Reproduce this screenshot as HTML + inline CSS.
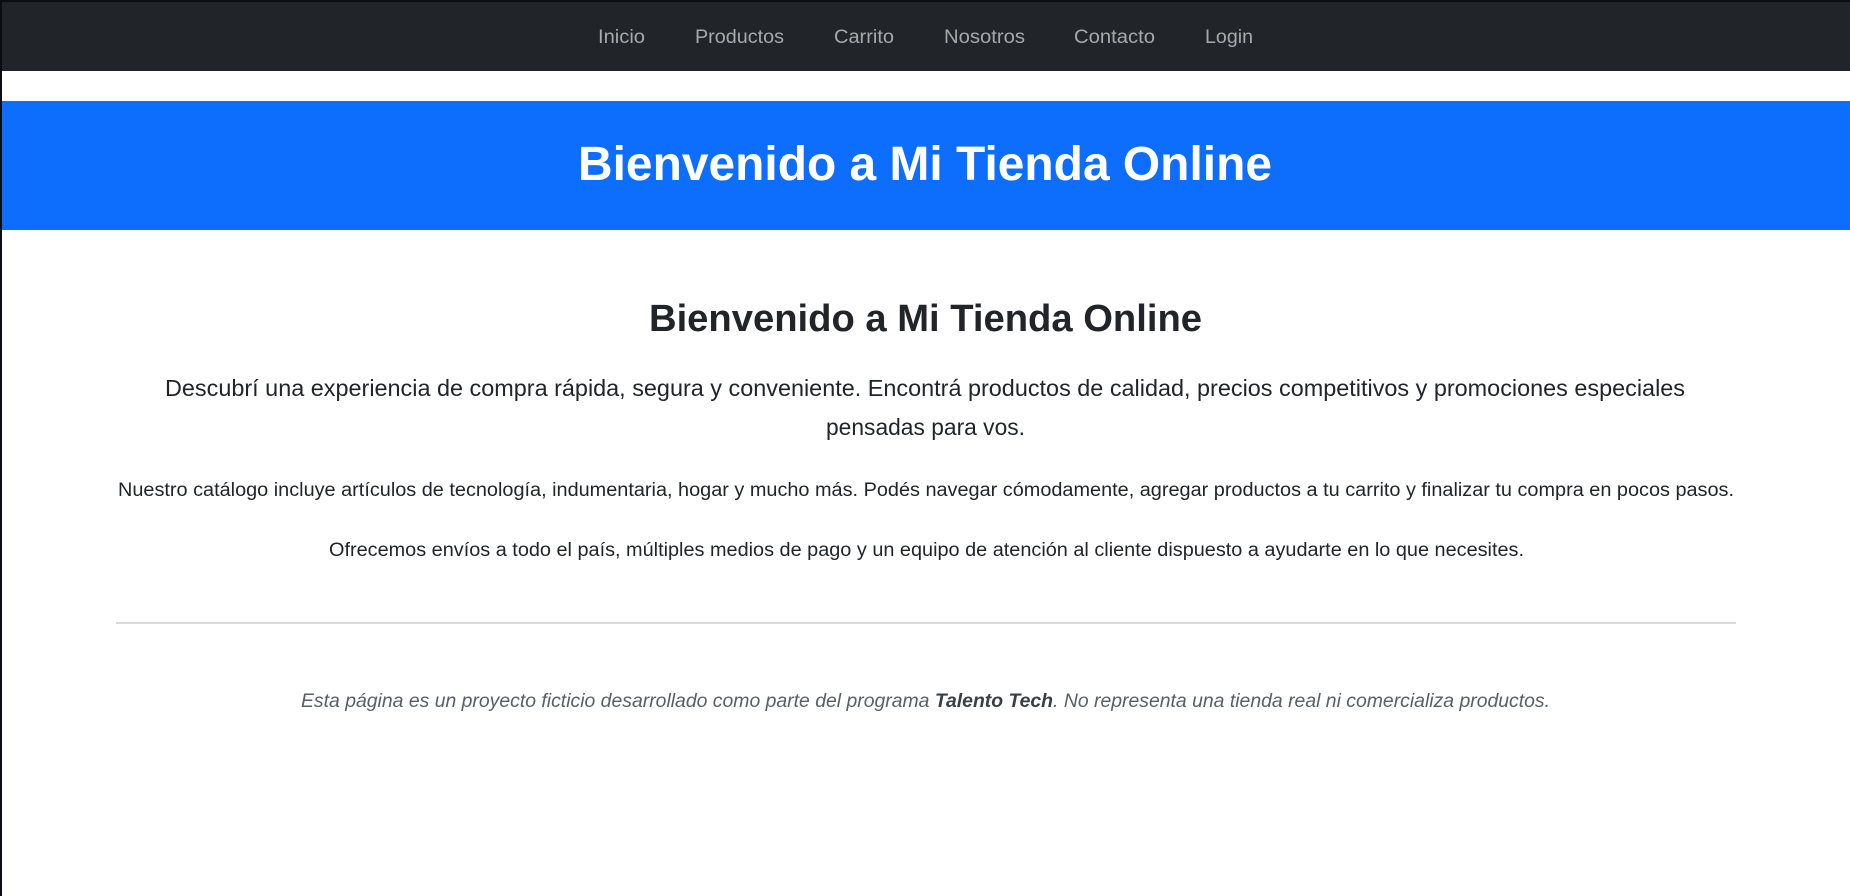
<!DOCTYPE html>
<html><head><meta charset="utf-8"><style>
html,body{margin:0;padding:0;background:#fff;width:1850px;height:896px;overflow:hidden}
svg{display:block}
text{font-family:"Liberation Sans",sans-serif}
</style></head><body>
<svg width="1850" height="896" viewBox="0 0 1850 896" xmlns="http://www.w3.org/2000/svg">
<rect x="0" y="0" width="1850" height="896" fill="#fff"/>
<rect x="0" y="0" width="1850" height="71" fill="#212529"/>
<rect x="0" y="0" width="1850" height="2" fill="#0b0d14"/>
<rect x="0" y="0" width="2" height="896" fill="#0b0d14"/>
<g fill="#a7aaad" font-size="19">
<text x="598" y="43" textLength="47" lengthAdjust="spacingAndGlyphs">Inicio</text>
<text x="695" y="43" textLength="89" lengthAdjust="spacingAndGlyphs">Productos</text>
<text x="834" y="43" textLength="60" lengthAdjust="spacingAndGlyphs">Carrito</text>
<text x="944" y="43" textLength="81" lengthAdjust="spacingAndGlyphs">Nosotros</text>
<text x="1074" y="43" textLength="81" lengthAdjust="spacingAndGlyphs">Contacto</text>
<text x="1205" y="43" textLength="48" lengthAdjust="spacingAndGlyphs">Login</text>
</g>
<rect x="2" y="101" width="1848" height="129" fill="#0d6efd"/>
<text x="578" y="180" font-size="48" font-weight="bold" fill="#fff" textLength="694" lengthAdjust="spacingAndGlyphs">Bienvenido a Mi Tienda Online</text>
<text x="649" y="331" font-size="38" font-weight="bold" fill="#212529" textLength="553" lengthAdjust="spacingAndGlyphs">Bienvenido a Mi Tienda Online</text>
<g fill="#212529" font-size="23.5">
<text x="165" y="396" textLength="1520" lengthAdjust="spacingAndGlyphs">Descubrí una experiencia de compra rápida, segura y conveniente. Encontrá productos de calidad, precios competitivos y promociones especiales</text>
<text x="826" y="435" textLength="199" lengthAdjust="spacingAndGlyphs">pensadas para vos.</text>
</g>
<g fill="#212529" font-size="19">
<text x="118" y="496" textLength="1616" lengthAdjust="spacingAndGlyphs">Nuestro catálogo incluye artículos de tecnología, indumentaria, hogar y mucho más. Podés navegar cómodamente, agregar productos a tu carrito y finalizar tu compra en pocos pasos.</text>
<text x="329" y="556" textLength="1195" lengthAdjust="spacingAndGlyphs">Ofrecemos envíos a todo el país, múltiples medios de pago y un equipo de atención al cliente dispuesto a ayudarte en lo que necesites.</text>
</g>
<rect x="116" y="622" width="1620" height="2" fill="#d9d9d9"/>
<text x="301" y="707" font-size="19" font-style="italic" fill="#595f66" textLength="1249" lengthAdjust="spacingAndGlyphs">Esta página es un proyecto ficticio desarrollado como parte del programa <tspan font-weight="bold" fill="#3a3f44">Talento Tech</tspan>. No representa una tienda real ni comercializa productos.</text>
</svg>
</body></html>
